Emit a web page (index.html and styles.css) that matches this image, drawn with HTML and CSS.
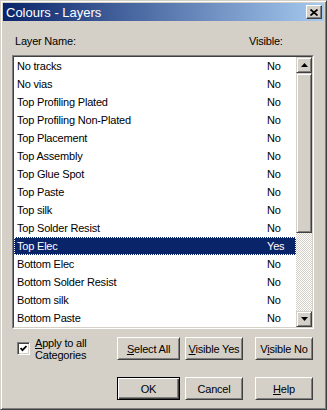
FILE: index.html
```html
<!DOCTYPE html>
<html lang="en">
<head>
    <meta charset="UTF-8">
    <meta name="viewport" content="width=device-width, initial-scale=1.0">
    <title>Colours - Layers</title>
    <link rel="stylesheet" href="styles.css">
</head>
<body>

    <div class="window">
        <div class="titlebar">
            <span class="title">Colours - Layers</span>
            <button class="close" aria-label="Close">
                <svg width="8" height="7" viewBox="0 0 8 7">
                    <path d="M0.5 0.5 L7.5 6.5 M7.5 0.5 L0.5 6.5" stroke="#000" stroke-width="1.7" fill="none"/>
                </svg>
            </button>
        </div>

        <div class="content">
            <div class="headings">
                <span>Layer Name:</span>
                <span>Visible:</span>
            </div>

            <div class="listbox">
                <div class="listbox-inner">
                    <ul class="rows">
                        <li class="row"><span>No tracks</span><span>No</span></li>
                        <li class="row"><span>No vias</span><span>No</span></li>
                        <li class="row"><span>Top Profiling Plated</span><span>No</span></li>
                        <li class="row"><span>Top Profiling Non-Plated</span><span>No</span></li>
                        <li class="row"><span>Top Placement</span><span>No</span></li>
                        <li class="row"><span>Top Assembly</span><span>No</span></li>
                        <li class="row"><span>Top Glue Spot</span><span>No</span></li>
                        <li class="row"><span>Top Paste</span><span>No</span></li>
                        <li class="row"><span>Top silk</span><span>No</span></li>
                        <li class="row"><span>Top Solder Resist</span><span>No</span></li>
                        <li class="row selected"><span>Top Elec</span><span>Yes</span></li>
                        <li class="row"><span>Bottom Elec</span><span>No</span></li>
                        <li class="row"><span>Bottom Solder Resist</span><span>No</span></li>
                        <li class="row"><span>Bottom silk</span><span>No</span></li>
                        <li class="row"><span>Bottom Paste</span><span>No</span></li>
                    </ul>
                    <div class="scrollbar">
                        <div class="scroll-btn">
                            <svg width="7" height="4" viewBox="0 0 7 4"><polygon points="3.5,0 7,4 0,4" fill="#000"/></svg>
                        </div>
                        <div class="thumb"></div>
                        <div class="track"></div>
                        <div class="scroll-btn">
                            <svg width="7" height="4" viewBox="0 0 7 4"><polygon points="0,0 7,0 3.5,4" fill="#000"/></svg>
                        </div>
                    </div>
                </div>
            </div>

            <div class="button-row first">
                <label class="check">
                    <span class="box">
                        <svg width="7" height="7" viewBox="0 0 7 7"><polyline points="0.5,3 2.5,5.2 6.5,1" stroke="#000" stroke-width="1.8" fill="none"/></svg>
                    </span>
                    <span class="check-text"><u>A</u>pply to all<br>Categories</span>
                </label>
                <button class="button wide"><u>S</u>elect All</button>
                <button class="button mid"><u>V</u>isible Yes</button>
                <button class="button last">V<u>i</u>sible No</button>
            </div>

            <div class="button-row second">
                <div class="spacer"></div>
                <button class="button wide default">OK</button>
                <button class="button mid">Cancel</button>
                <button class="button last"><u>H</u>elp</button>
            </div>
        </div>
    </div>

</body>
</html>
```

FILE: styles.css
```css
body {
    margin: 0;
    font-family: "Liberation Sans", Arial, sans-serif;
    font-size: 11px;
    letter-spacing: -0.2px;
    color: #000;
    background-color: #d4d0c8;
}
.window {
    width: 327px;
    height: 410px;
    box-sizing: border-box;
    padding: 2px;
    background-color: #d4d0c8;
    border: 1px solid;
    border-color: #d4d0c8 #404040 #404040 #d4d0c8;
    box-shadow: inset 1px 1px #fff, inset -1px -1px #808080;
}
.titlebar {
    height: 18px;
    display: flex;
    align-items: center;
    justify-content: space-between;
    background: linear-gradient(to right, #0a246a, #a6caf0);
}
.title {
    color: #fff;
    font-size: 13px;
    letter-spacing: 0;
    padding-left: 3px;
}
.close {
    width: 16px;
    height: 14px;
    margin-right: 2px;
    padding: 0;
    display: flex;
    align-items: center;
    justify-content: center;
    background-color: #d4d0c8;
    border: 1px solid;
    border-color: #fff #404040 #404040 #fff;
    box-shadow: inset -1px -1px #808080;
}
.content {
    padding: 0 10px 0 9px;
}
.headings {
    display: grid;
    grid-template-columns: 234px auto;
    padding-left: 3px;
    margin-top: 13px;
    line-height: 14px;
}
.listbox {
    margin-top: 7px;
    width: 302px;
    height: 274px;
    box-sizing: border-box;
    border: 1px solid;
    border-color: #808080 #fff #fff #808080;
}
.listbox-inner {
    height: 100%;
    box-sizing: border-box;
    display: flex;
    border: 1px solid;
    border-color: #404040 #d4d0c8 #d4d0c8 #404040;
}
.rows {
    flex: 1;
    margin: 0;
    padding: 0;
    list-style: none;
    background-color: #fff;
}
.row {
    height: 18px;
    display: grid;
    grid-template-columns: 250px auto;
    align-items: center;
    padding-left: 3px;
}
.row.selected {
    background-color: #0a246a;
    color: #fff;
    outline: 1px dotted #fff;
    outline-offset: -1px;
}
.scrollbar {
    width: 16px;
    display: flex;
    flex-direction: column;
}
.scroll-btn,
.thumb {
    box-sizing: border-box;
    background-color: #d4d0c8;
    border: 1px solid;
    border-color: #d4d0c8 #404040 #404040 #d4d0c8;
    box-shadow: inset 1px 1px #fff, inset -1px -1px #808080;
}
.scroll-btn {
    height: 16px;
    display: flex;
    align-items: center;
    justify-content: center;
}
.thumb {
    height: 160px;
}
.track {
    flex: 1;
    background: repeating-conic-gradient(#d4d0c8 0 25%, #fff 0 50%) 0 0 / 2px 2px;
}
.button-row {
    display: flex;
    height: 23px;
}
.button-row.first {
    margin-top: 8px;
}
.button-row.second {
    margin-top: 17px;
}
.check,
.spacer {
    width: 105px;
}
.check {
    display: flex;
    align-items: flex-start;
}
.box {
    width: 13px;
    height: 13px;
    box-sizing: border-box;
    margin: 5px 0 0 5px;
    display: flex;
    align-items: center;
    justify-content: center;
    background-color: #fff;
    border: 1px solid;
    border-color: #808080 #fff #fff #808080;
    box-shadow: inset 1px 1px #404040, inset -1px -1px #d4d0c8;
}
.check-text {
    margin-left: 5px;
    line-height: 12px;
}
.button {
    height: 23px;
    padding: 0;
    font-family: inherit;
    font-size: 11px;
    letter-spacing: -0.2px;
    color: #000;
    background-color: #d4d0c8;
    border: 1px solid;
    border-color: #fff #404040 #404040 #fff;
    box-shadow: inset 1px 1px #d4d0c8, inset -1px -1px #808080;
}
.button.wide {
    width: 63px;
}
.button.mid {
    width: 58px;
    margin-left: 5px;
}
.button.last {
    width: 58px;
    margin-left: 12px;
}
.button.default {
    border-color: #000;
    box-shadow: inset 1px 1px #fff, inset -1px -1px #404040, inset -2px -2px #808080;
}
```
